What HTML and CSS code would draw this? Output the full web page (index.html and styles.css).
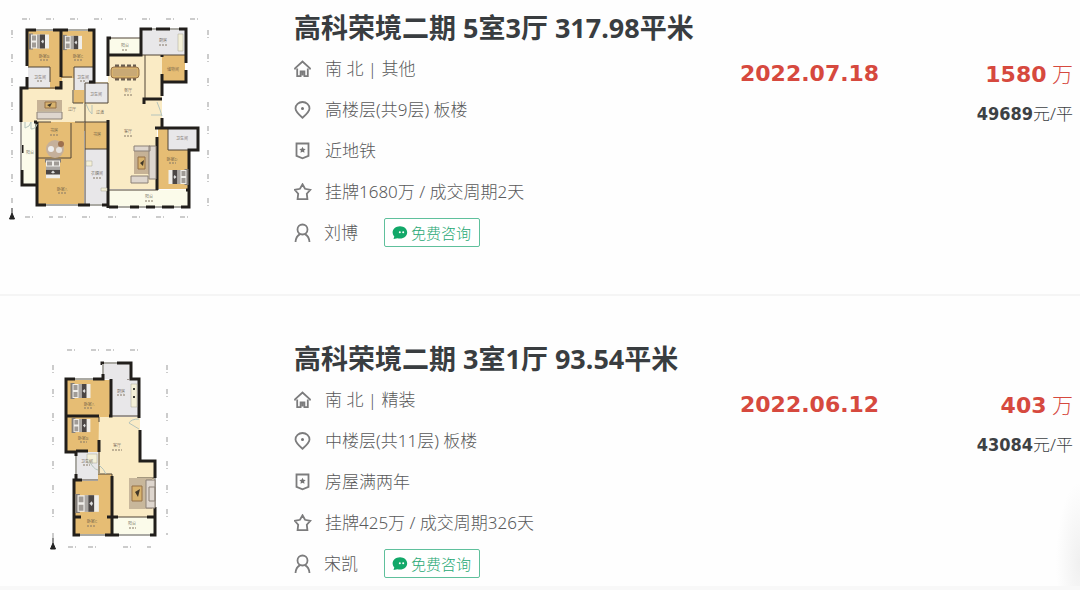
FILE: index.html
```
<!DOCTYPE html>
<html lang="zh-CN">
<head>
<meta charset="utf-8">
<meta name="viewport" content="width=device-width, initial-scale=1">
<title>高科荣境二期 成交记录</title>
<link rel="stylesheet" href="styles.css">
</head>
<body>
<svg class="defs" width="0" height="0" aria-hidden="true">
  <symbol id="i-home" viewBox="0 0 18 18"><path d="M1 9.500V8.300L8.500 1.500 16 8.300v1.200M3.200 8.500V16.200h3.400v-4.700h3.800v4.700h3.400V8.500M8.500 12.500v3"/></symbol>
  <symbol id="i-pin" viewBox="0 0 18 18"><path d="M8.500 16.800C4.500 13.300 1.500 10.600 1.500 7.500a7 6.500 0 0 1 14 0c0 3.100-3 5.800-7 9.300z"/><circle cx="8.500" cy="7.500" r="1.500" class="solid"/></symbol>
  <symbol id="i-tag" viewBox="0 0 18 18"><path d="M2.500 1.500h12v12.300l-6 2.500-6-2.500z"/><path class="solid" d="m8.500 4.800 1 2 2.200.3-1.600 1.500.4 2.200-2-1-2 1 .4-2.200-1.600-1.500 2.200-.3z"/></symbol>
  <symbol id="i-star" viewBox="0 0 18 18"><path d="m8.500 1.300 2.500 4.500 5.300 1-3.500 3.900.6 5.500H3.600l.6-5.500L.7 6.800l5.300-1z"/></symbol>
  <symbol id="i-user" viewBox="0 0 18 20"><circle cx="8.500" cy="6.500" r="5"/><path d="M1.500 19c.3-4 2-6.600 4.500-7.900M15.500 19c-.3-4-2-6.600-4.500-7.900"/></symbol>
  <symbol id="i-chat" viewBox="0 0 16 14"><path fill="#12a869" d="M8 .2c4.200 0 7.200 2.800 7.200 6.100S12.200 12.600 8 12.600c-1 0-1.800-.1-2.500-.4L1.500 13l.8-2.600C1.200 9.300.6 7.800.6 6.300.6 3 3.800.2 8 .2z"/><circle cx="7.800" cy="6.200" r="1" fill="#fff"/><circle cx="11.200" cy="6.200" r="1" fill="#fff"/></symbol>
  <symbol id="bed" viewBox="0 0 20 16"><path fill="#827d78" d="M0 0h4v16H0z"/><path fill="#f0eeea" d="M2 1h18v14H2z"/><path fill="#a09b96" d="M3 2h4v5H3zM3 9h4v5H3z"/><path fill="#4b4645" d="M11 1h5v14h-5z"/><path fill="#aaa6a2" d="M8 1h3v14H8z"/><path fill="#ddd" d="m12 8 2-2 1 2-1 2z"/></symbol>
</svg>

<main class="list">
  <article class="deal">
    <div class="thumb">
      <svg class="plan" viewBox="0 14 218 210" role="img" aria-label="5室3厅户型图">
        <g class="dims"><path d="M22 19h180M25 217h28M58 217h40M108 217h90M12 30v175M208 30v180"/></g>
        <path class="wood" d="M28 31h65v51h-9v8H28zM37 122h47v83H37zM85 122h22v27H85zM162 55h23v27h-23zM158 128h30v61h-30z"/>
        <path class="cream" d="M22 89h62v-7h24V55h54v72h-5v62h-48v-67H22zM62 78h12v12H62z"/>
        <path class="tile" d="M28 67h22v21H28zM74 67h19v23H74zM85 83h23v20H85zM142 30h43v25h-43zM168 129h29v21h-29zM85 149h23v56H85z"/>
        <path class="pale" d="M109 38h32v17h-32zM22 122h15v62H22zM109 190h80v16h-80z"/>
        <path class="wood" d="M74 90h10v13H74zM72 123h13v8H72z"/>
        <g class="thin"><path d="M28 67h22v15M74 90V67h19M73 90v13h10M85 83h23v20H85zM141 55h21M162 55h23M145 55V99M85 149h22M109 38h32M168 129v21h20M109 190h49M71 123v35H37M85 122v83M37 122h14M75 122h33M85 122V103M61 77h11M28 88h34"/></g>
        <g class="wall"><path d="M27 66V30h9M53 30h15M88 30h6v52h-5M61 30v47M27 77v11h-6v34M55 88h6v-7M37 122h-3M22 170v15h15M37 122v83h9M78 205h12M102 205h6M108 76V38h3M108 55h33V29h11M156 29h14M179 29h7v34M186 70v12h-24M162 55v2M162 74v22M144 104v-5h18M162 118v10M155 128h43v22h-9v57h-8M162 207h12M146 207h9M130 207h9M109 207h9M108 120v88M157 137v53M186 190h3M22 145v8"/></g>
        <g class="window"><path d="M36 30h17M68 30h20M46 205h32M90 205h12M152 29h4M170 29h9M118 207h12M139 207h7M155 207h7M174 207h7M21 122v48"/></g>
        <use href="#bed" x="29" y="33" width="20" height="17"/><use href="#bed" x="63" y="34" width="19" height="17"/>
        <use href="#bed" x="168" y="169" width="21" height="16" transform="rotate(180 178.500 177)"/><use href="#bed" x="43" y="160" width="20" height="17" transform="rotate(90 53 168.500)"/>
        <circle cx="55" cy="149" r="9" fill="#c5b09b"/><circle cx="51" cy="149" r="3" fill="#eee"/><circle cx="59" cy="150" r="3" fill="#e6e2de"/><circle cx="61" cy="144" r="3" fill="#9e704e"/>
        <path fill="#c6b296" d="M37 100h25v11H37zM134 150h17v24h-17z"/>
        <g class="sofa"><path d="M37 112h25v7H37zM134 146h16v5h-16zM149 146h7v33h-7zM131 176h17v7h-17z"/></g><path class="table" d="M45 102h11v6H45zM138 157h7v12h-7z"/><path fill="#403728" d="m47 105 5-2-2 4zM140 163l4-3-1 6z"/>
        <path stroke="#695d50" stroke-width="3" stroke-dasharray="4 2" d="M115 66h21M115 79h21"/><rect class="table" x="111" y="67" width="28" height="11" rx="3"/><path fill="#c9a975" d="M113 69h24v7h-24z"/>
        <path fill="#f4f0d8" stroke="#aaa797" stroke-width=".5" d="M178 34h5v17h-5zM86 161h6v5h-6zM101 188h6v3h-6z"/><path class="door" d="M25 122v6q5-1 6-6v7q5 0 6-5M86 104q3 8 6 10v-9M157 102q3 7 5 14M151 115h11"/>
        <g class="room"><text x="44" y="58">卧室B</text><text x="78" y="58">卧室C</text><text x="40" y="79">卫生间</text><text x="83" y="79">卫生间</text><text x="96" y="96">卫生间</text><text x="125" y="47">阳台</text><text x="163" y="42">厨房</text><text x="173" y="71">储物间</text><text x="128" y="92">餐厅</text><text x="128" y="133">客厅</text><text x="54" y="132">书房</text><text x="97" y="136">书房</text><text x="97" y="175">衣帽间</text><text x="62" y="191">卧室A</text><text x="30" y="154">阳台</text><text x="172" y="161">卧室D</text><text x="182" y="140">卫生间</text><text x="149" y="198">阳台</text><text x="72" y="111">过厅</text><text x="100" y="114">过道</text></g>
        <g class="areas"><path d="M40 60h8M74 60h8M37 81h6M80 81h6M122 50h6M159 45h9M124 95h9M124 136h9M50 135h8M93 178h8M58 193h9M169 163h7M145 201h8"/></g>
        <path class="north" d="m12 213-2.500 6h5zM12 208v5"/>
      </svg>
    </div>
    <div class="info">
      <h2>高科荣境二期 5室3厅 317.98平米</h2>
      <ul>
        <li><svg class="icon"><use href="#i-home"/></svg>南 北 | 其他</li>
        <li><svg class="icon"><use href="#i-pin"/></svg>高楼层(共9层) 板楼</li>
        <li><svg class="icon"><use href="#i-tag"/></svg>近地铁</li>
        <li><svg class="icon"><use href="#i-star"/></svg>挂牌1680万 / 成交周期2天</li>
        <li><svg class="icon user"><use href="#i-user"/></svg>刘博<button type="button" class="ask"><svg><use href="#i-chat"/></svg>免费咨询</button></li>
      </ul>
    </div>
    <div class="stats">
      <time datetime="2022-07-18">2022.07.18</time>
      <div class="money"><p class="price"><strong>1580</strong> 万</p><p class="unit"><strong>49689</strong>元/平</p></div>
    </div>
  </article>

  <article class="deal">
    <div class="thumb">
      <svg class="plan" viewBox="0 345 218 210" role="img" aria-label="3室1厅户型图">
        <g class="dims"><path d="M67 350h35M106 350h46M68 547h17M88 547h18M123 547h28M53 365v174M167 365v170"/></g>
        <path class="wood" d="M67 380h44v37H99v35H67zM75 481h23v-8h14v62H75z"/>
        <path class="cream" d="M99 417h41v44h14v56h-42v-43H98z"/>
        <path class="tile" d="M103 364h27v15h9v38h-27v-38h-9zM76 452h22v28H76z"/>
        <path class="pale" d="M112 517h42v18h-42z"/>
        <g class="thin"><path d="M103 379v-16h27M111 416h28M99 417v5M99 447v26M76 455v24M82 480h16M98 474h14v12M112 517h42M137 478h18M128 379v1"/></g>
        <g class="wall"><path d="M75 379h-9v73h10v4M93 379h10v-5M102 365v-2h2M117 363h14v16h8v39M66 416h33M109 416h2v-37M99 440v12M76 451h12M140 430v31h15v17M76 474v6h-2v55h6M74 480h8M105 535h14M150 535h5v-28M112 476v59M75 517h6M107 517h11M147 517h7"/></g>
        <g class="window"><path d="M75 379h18M103 364v10M104 363h13M80 535h25M119 535h31M76 456v18M155 478v29"/></g>
        <use href="#bed" x="68" y="383" width="25" height="16"/><use href="#bed" x="68" y="418" width="26" height="15"/><use href="#bed" x="75" y="494" width="24" height="19"/>
        <path fill="#c8b79b" d="M129 478h23v31h-23z"/><path class="sofa" d="M146 480h9v28h-9zM149 487h6v14h-6z"/><path class="table" d="M132 486h10v15h-10z"/><path fill="#403728" d="m135 492 5-3-2 8z"/>
        <path fill="#f4f0d8" stroke="#aaa797" stroke-width=".5" d="M131 384h6v23h-6zM87 454h10v9H87z"/><circle cx="134" cy="389" r="1"/><circle cx="134" cy="397" r="1"/>
        <path class="door" d="M139 419q-8 0-10 4l10 6M98 470q-5-1-9-10M99 465q5 4 7 9"/>
        <g class="room"><text x="89" y="406">卧室A</text><text x="121" y="393">厨房</text><text x="83" y="440">卧室B</text><text x="117" y="447">客厅</text><text x="87" y="463">卫生间</text><text x="92" y="523">卧室C</text><text x="132" y="525">阳台</text></g>
        <g class="areas"><path d="M84 408h9M117 395h8M80 442h7M112 450h10M83 465h7M87 526h9M129 528h7"/></g>
        <path class="north" d="m53 543-2.500 6h5zM53 538v5"/>
      </svg>
    </div>
    <div class="info">
      <h2>高科荣境二期 3室1厅 93.54平米</h2>
      <ul>
        <li><svg class="icon"><use href="#i-home"/></svg>南 北 | 精装</li>
        <li><svg class="icon"><use href="#i-pin"/></svg>中楼层(共11层) 板楼</li>
        <li><svg class="icon"><use href="#i-tag"/></svg>房屋满两年</li>
        <li><svg class="icon"><use href="#i-star"/></svg>挂牌425万 / 成交周期326天</li>
        <li><svg class="icon user"><use href="#i-user"/></svg>宋凯<button type="button" class="ask"><svg><use href="#i-chat"/></svg>免费咨询</button></li>
      </ul>
    </div>
    <div class="stats">
      <time datetime="2022-06-12">2022.06.12</time>
      <div class="money"><p class="price"><strong>403</strong> 万</p><p class="unit"><strong>43084</strong>元/平</p></div>
    </div>
  </article>
</main>
</body>
</html>
```
FILE: styles.css
```
* { box-sizing: border-box; }

body {
  margin: 0;
  background: #f8f8f8;
  color: #58595a;
  font: 300 17px/24px "Noto Sans", "Noto Sans CJK SC", sans-serif;
}

h2, p, ul { margin: 0; padding: 0; }
.defs { position: absolute; }

.list {
  background: radial-gradient(ellipse 24px 80px at 100% 96%, #f0f0f0, #fefefe);
}

.deal {
  display: grid;
  grid-template-columns: 294px minmax(0, 1fr) 340px;
  padding: 8px 0 41px;
}

.deal + .deal {
  border-top: 2px solid #f5f5f5;
  padding: 43px 0 2px;
}

.thumb { padding-top: 6px; }
.plan { display: block; width: 218px; height: 210px; }

h2 {
  color: #393d40;
  font-size: 27px;
  line-height: 40px;
  font-weight: 700;
  white-space: nowrap;
}

ul { list-style: none; }

li {
  display: flex;
  align-items: center;
  height: 41px;
  white-space: nowrap;
}

.icon {
  width: 18px;
  height: 18px;
  margin-right: 13px;
  fill: none;
  stroke: #7c7c7d;
  stroke-width: 1.8;
}

.icon.user { height: 20px; margin-right: 12px; }
.solid { fill: #747475; stroke: none; }

.ask {
  display: flex;
  align-items: center;
  gap: 3px;
  height: 29px;
  margin-left: 26px;
  padding: 0 8px 0 7px;
  border: 1px solid #5fc09c;
  border-radius: 2px;
  background: #fff;
  color: #1fa873;
  font: inherit;
  font-size: 15px;
}

.ask svg { width: 16px; height: 14px; }

.stats {
  display: flex;
  justify-content: space-between;
  padding: 51px 7px 0 0;
  color: #d6493e;
  line-height: 30px;
}

time, .price strong {
  font-family: "DejaVu Sans", sans-serif;
  font-size: 22px;
  font-weight: 700;
}

.money { text-align: right; }
.price { font-size: 21px; }

.unit {
  margin-top: 9px;
  color: #3d4144;
}

.unit strong {
  font-family: "DejaVu Sans Condensed", "DejaVu Sans", sans-serif;
  font-size: 18px;
  font-weight: 700;
}

/* Floor plans */
.wood { fill: #e6bd74; }
.cream { fill: #faebc5; }
.tile { fill: #e8e7e9; }
.pale { fill: #fbfbea; }
.wall { fill: none; stroke: #211e1b; stroke-width: 3; }
.thin { fill: none; stroke: #514536; stroke-width: 1; }
.window { fill: none; stroke: #aaa9a3; stroke-width: 2; }
.door { fill: none; stroke: #b5c4bc; stroke-width: 1; }
.sofa { fill: #ded6ce; stroke: #8b8076; stroke-width: 1; }
.table { fill: #d8b36e; stroke: #957147; stroke-width: 1; }
.dims { fill: none; stroke: #ccc; stroke-width: 2; stroke-dasharray: 5 2 1 16; }
.areas { fill: none; stroke: #857866; stroke-width: 1; stroke-dasharray: 2 1; }
.room { fill: #51483b; font-size: 4px; text-anchor: middle; }
.north { fill: #222; stroke: #222; stroke-width: 1; }
```
